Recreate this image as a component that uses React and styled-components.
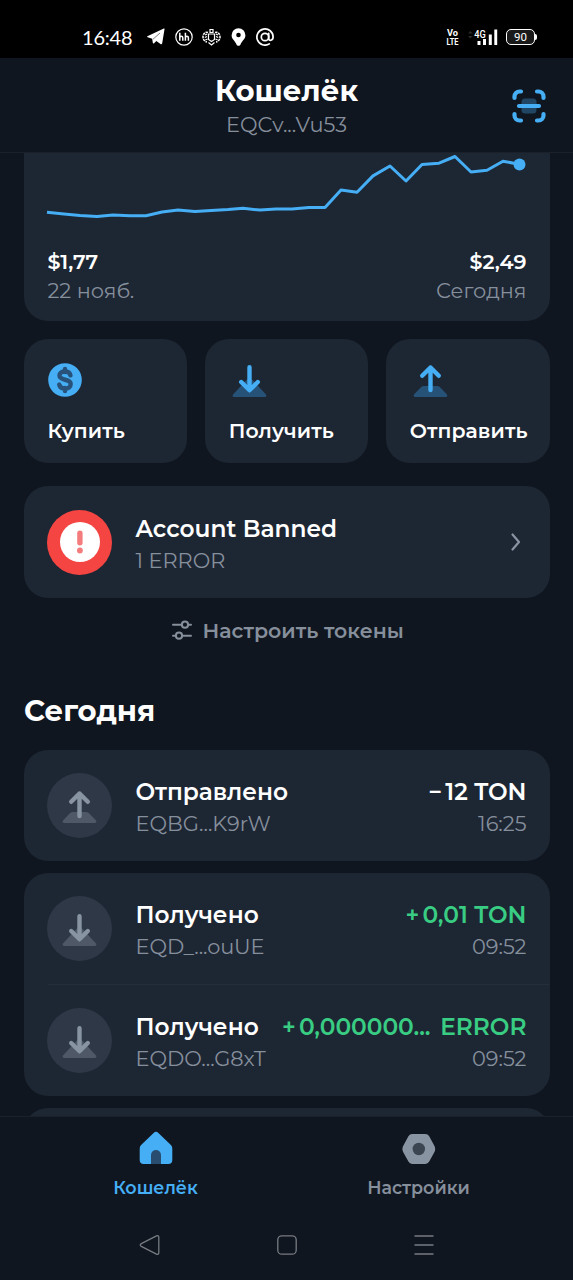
import React from 'react';
import styled, { createGlobalStyle } from 'styled-components';

const accent = '#45aef5'
const muted = '#868f9c'
const panel = '#1d2633'
const page = '#10161f'

const GlobalStyle = createGlobalStyle`
  * {
    box-sizing: border-box;
  }

  body {
    margin: 0;
    background: ${page};
    color: white;
    font-family: 'Montserrat', 'Inter', 'Noto Sans', sans-serif;
  }

  svg {
    display: block;
    flex: none;
  }
`

const Screen = styled.div`
  display: flex;
  flex-direction: column;
  width: 573px;
  height: 1280px;
  overflow: hidden;
  background: ${page};
`

const Text = styled.div`
  color: ${props => props.$color || 'white'};
  font-size: ${props => props.$size || 20.4}px;
  font-weight: 600;
  line-height: ${props => props.$line || 30}px;
  white-space: pre;
`

const Title = styled(Text)`
  font-size: 23.3px;
  line-height: 34px;
`

const Heading = styled(Text)`
  font-size: 29.1px;
  font-weight: 700;
  line-height: 38px;
`

const Caption = styled(Text)`
  color: ${muted};
  font-size: 20.9px;
  font-weight: 400;
`

/* status bar */

const StatusBar = styled.div`
  display: flex;
  align-items: center;
  justify-content: space-between;
  height: 58px;
  padding: 15px 36px 0 82px;
  background: black;
`

const StatusGroup = styled.div`
  display: flex;
  align-items: center;
  gap: ${props => props.$gap}px;
`

const Clock = styled.div`
  font-family: 'Lato', sans-serif;
  font-size: 20px;
  letter-spacing: -0.2px;
  line-height: 24px;
  margin-right: 5px;
  width: 50px;
`

const Battery = styled.div`
  display: flex;
  align-items: center;

  &::after {
    content: '';
    width: 2px;
    height: 6px;
    border-radius: 0 2px 2px 0;
    background: white;
  }
`

const BatteryBody = styled.div`
  width: 29px;
  height: 16px;
  border: 1.5px solid white;
  border-radius: 5px;
  background: #1a1a1a;
  font-family: 'Roboto', sans-serif;
  font-size: 11.5px;
  line-height: 14px;
  text-align: center;
`

/* header */

const Header = styled.header`
  display: grid;
  grid-template-columns: 1fr auto 1fr;
  align-items: center;
  height: 95px;
  padding: 2px 26px 0;
  border-bottom: 1px solid #1a212b;
`

const HeaderTitle = styled.div`
  grid-column: 2;
  display: flex;
  flex-direction: column;
  align-items: center;
`

const ScanButton = styled.div`
  justify-self: end;
  margin-top: -1px;
`

/* content */

const Content = styled.main`
  flex: 1;
  min-height: 0;
  overflow: hidden;
  padding: 0 23.5px 0 24px;
`

const ChartCard = styled.section`
  height: 168px;
  background: ${panel};
  border-radius: 0 0 24px 24px;
`

const ChartLabels = styled.div`
  display: flex;
  justify-content: space-between;
  padding: 8px 23px 0 23.5px;
`

const Column = styled.div`
  display: flex;
  flex-direction: column;
  align-items: ${props => props.$end ? 'flex-end' : 'flex-start'};
`

const Actions = styled.div`
  display: grid;
  grid-template-columns: repeat(3, 1fr);
  gap: 18px;
  margin-top: 18px;
`

const Action = styled.div`
  height: 124px;
  padding: 20px 0 0 23.5px;
  border-radius: 24px;
  background: ${panel};
`

const ActionLabel = styled(Text)`
  letter-spacing: 0.1px;
  margin-top: 15px;
`

const Card = styled.section`
  margin-top: ${props => props.$top}px;
  border-radius: 24px;
  background: ${panel};
`

const Row = styled.div`
  display: flex;
  align-items: center;
  height: ${props => props.$height || 111}px;
  padding: 0 23px;
`

const RowText = styled(Column)`
  margin-left: 23.5px;
  padding-top: 3px;
`

const RowValue = styled(Column)`
  margin-left: auto;
  padding-top: 3px;
`

const Divider = styled.div`
  height: 1px;
  margin-left: 24px;
  background: #242d3a;
`

const Badge = styled.div`
  display: flex;
  align-items: center;
  justify-content: center;
  width: 65px;
  height: 65px;
  border-radius: 50%;
  background: ${props => props.$error ? '#f54542' : '#2e3847'};
`

const ChevronBox = styled.div`
  margin-left: auto;
`

const Configure = styled.div`
  display: flex;
  align-items: center;
  justify-content: center;
  gap: 11px;
  height: 66px;
  padding-left: 2px;
`

const DayTitle = styled(Heading)`
  margin-top: 28px;
`

/* bottom */

const TabBar = styled.nav`
  display: grid;
  grid-template-columns: 1fr 1fr;
  height: 94px;
  padding: 11px 23px 0 24px;
  border-top: 1px solid #1a212b;
`

const Tab = styled.div`
  display: flex;
  flex-direction: column;
  align-items: center;
  gap: 8px;
`

const TabLabel = styled(Text)`
  font-size: 17.5px;
  line-height: 20px;
`

const SystemKeys = styled.div`
  display: flex;
  justify-content: center;
  align-items: center;
  gap: 115px;
  height: 70px;
`

const ArrowIcon = ({ up, color, base, baseOpacity }) => (
  <svg width="42" height="42" viewBox="0 0 42 42" fill="none">
    <path
      d={ up
        ? 'M14 27h13a4 4 0 0 1 2.800 1.100l7 7.200c1.100 1.300.6 2.700-1.100 2.700H5.300c-1.700 0-2.200-1.400-1.100-2.700l7-7.200A4 4 0 0 1 14 27z'
        : 'M17.500 21a4.300 4.300 0 0 1 6 0l13.300 14.300c1.100 1.300.6 2.700-1.100 2.700H5.300c-1.700 0-2.200-1.400-1.100-2.700z' }
      fill={ base } opacity={ baseOpacity } />
    <path
      d={ up ? 'M20.500 31V8.500M12.200 16.800l8.300-8.300 8.300 8.300' : 'M20.500 8.300V31M12.200 23l8.300 8.300 8.300-8.300' }
      stroke={ color } strokeWidth="4.400" strokeLinecap="round" strokeLinejoin="round" />
  </svg>
)

const BuyIcon = () => (
  <svg width="42" height="42" viewBox="0 0 42 42" fill="none">
    <circle cx="17" cy="21" r="16.800" fill={ accent } />
    <path d="M22.500 16.300c-.7-2.500-2.700-3.800-5.500-3.800-3.200 0-5.500 1.500-5.500 4.100 0 5.600 11.200 2.700 11.200 8.500 0 2.800-2.400 4.500-5.700 4.500-2.900 0-5.100-1.400-5.800-4M17 10v3M17 29v3" stroke="#28527a" strokeWidth="4.400" strokeLinecap="round" />
  </svg>
)

const ScanIcon = () => (
  <svg width="36" height="36" viewBox="0 0 36 36" fill="none">
    <rect x="10.500" y="10.500" width="15" height="15" rx="3.500" fill={ accent } opacity=".32" />
    <path d="M3.500 10V8.500a5 5 0 0 1 5-5H10M26 3.500h1.500a5 5 0 0 1 5 5V10M32.500 26v1.500a5 5 0 0 1-5 5H26M10 32.500H8.500a5 5 0 0 1-5-5V26M8 18h20" stroke={ accent } strokeWidth="4.200" strokeLinecap="round" />
  </svg>
)

const PriceChart = () => (
  <svg width="525" height="86" viewBox="24 153 525 86" fill="none">
    <path
      d="M47 212.300L64 214l16 1.500 17 .9 16-1.500 17 .8h16l16-3.700 16-2 17 1.400 16-1 17-.8 15-1.400 17 1.900 16-1.200h16l17-1.300h16l16-17.600 16 2.200 16-16.300 17-9.900 16 15 16-16.500 17-1.300 16-6.700 16 15.500 16-1.800 16-9 16 3"
      stroke={ accent } strokeWidth="3" strokeLinejoin="round" />
    <circle cx="519.500" cy="164.500" r="6" fill={ accent } />
  </svg>
)

const AlertIcon = () => (
  <svg width="40" height="40" viewBox="0 0 40 40">
    <circle cx="20" cy="20" r="20" fill="white" />
    <rect x="17.200" y="8.600" width="5.400" height="14.800" rx="2.700" fill="#f57c7c" />
    <circle cx="19.900" cy="28.500" r="2.900" fill="#f57c7c" />
  </svg>
)

const SlidersIcon = () => (
  <svg width="20" height="22" viewBox="0 0 20 22" fill="none" stroke={ muted } strokeWidth="2" strokeLinecap="round">
    <path d="M1 4.700h8.500M16.500 4.700H19M1 15.700h2.500M10.500 15.700H19" />
    <circle cx="13" cy="4.700" r="3.100" />
    <circle cx="7" cy="15.700" r="3.100" />
  </svg>
)

const HomeIcon = () => (
  <svg width="42" height="42" viewBox="0 0 42 42">
    <path d="M18.600 5a3.400 3.400 0 0 1 4.800 0l12.500 12a5 5 0 0 1 1.400 3.500V32a4 4 0 0 1-4 4h-24.600a4 4 0 0 1-4-4V20.500a5 5 0 0 1 1.400-3.500z" fill={ accent } />
    <path d="M16 36V27a5 5 0 0 1 10 0v9z" fill="#284d6e" />
  </svg>
)

const SettingsIcon = () => (
  <svg width="42" height="42" viewBox="0 0 42 42">
    <path d="M14.300 6h13a4.500 4.500 0 0 1 3.900 2.200l5 9.300a7 7 0 0 1 0 7l-5 9a4.500 4.500 0 0 1-3.900 2.500h-13a4.500 4.500 0 0 1-3.900-2.500l-5-9a7 7 0 0 1 0-7l5-9.300A4.500 4.500 0 0 1 14.300 6z" fill="#8994a3" />
    <circle cx="20.800" cy="21" r="6.200" fill="#3b4451" />
  </svg>
)

const TelegramIcon = () => (
  <svg width="18" height="17" viewBox="0 0 18 17" fill="white">
    <path d="M17.500 1.200L15.200 15.300c-.2 1-.9 1.200-1.700.7L9.300 13l-2.200 2.300c-.6.6-1.200.3-1.300-.5L5.200 10.800.7 9.200c-.8-.3-.8-.9.200-1.300L16.300.8c.8-.3 1.300-.3 1.200.4z" />
    <path d="M6 11.200l7-6.200" stroke="black" strokeWidth=".5" />
  </svg>
)

const JobsIcon = () => (
  <svg width="18" height="18" viewBox="0 0 18 18" fill="none" stroke="white">
    <circle cx="9" cy="9" r="8.200" strokeWidth="1.200" />
    <path d="M4.800 4.800v8M4.800 10c0-2.300 3-2.300 3 0v2.800M10.400 4.800v8M10.400 10c0-2.300 3-2.300 3 0v2.800" strokeWidth="1.500" />
  </svg>
)

const EmblemIcon = () => (
  <svg width="19" height="18" viewBox="0 0 19 18" fill="none" stroke="white" strokeWidth="1.200">
    <path d="M8 1.500h3v3H8zM6.500 6h6v5.500l-3 2-3-2zM6.500 14.500l3 2.500 3-2.500" />
    <path d="M6 4.500C3 3.500 1 6 1 9c0 2.500 1.500 4.500 4 5M13 4.500c3-1 5 1.500 5 4.500 0 2.500-1.500 4.500-4 5" strokeDasharray="2.500 .8" strokeWidth="1.500" />
    <path d="M5.200 6L3 7M5 8.500l-2.200 1M5.500 11l-2.200 1M13.800 6L16 7M14 8.500l2.200 1M13.500 11l2.200 1" />
  </svg>
)

const PinIcon = () => (
  <svg width="15" height="18" viewBox="0 0 15 18">
    <path d="M7.500.3a6.900 6.900 0 0 1 6.900 6.900c0 4-3.700 5.800-4.900 9.200-.5 1.800-3.500 1.800-4 0C4.300 13 .6 11.200.6 7.200A6.900 6.900 0 0 1 7.500.3z" fill="white" />
    <circle cx="7.500" cy="7" r="2.300" fill="black" />
  </svg>
)

const MailIcon = () => (
  <svg width="18" height="18" viewBox="0 0 18 18" fill="none" stroke="white" strokeWidth="1.700" strokeLinecap="round">
    <circle cx="9" cy="9" r="3.700" />
    <path d="M12.700 5.300v5.200c0 2.900 4.400 2.200 4.400-1.500A8.100 8.100 0 1 0 13.300 15.900" />
  </svg>
)

const VolteIcon = () => (
  <svg width="14" height="26" viewBox="0 0 14 26" fill="white" fontFamily="Roboto, sans-serif" fontSize="9.500" fontWeight="700">
    <text x="1" y="11.800" textLength="11" lengthAdjust="spacingAndGlyphs">Vo</text>
    <text x=".5" y="20.800" textLength="12" lengthAdjust="spacingAndGlyphs">LTE</text>
  </svg>
)

const SignalIcon = () => (
  <svg width="30" height="18" viewBox="0 0 30 18" fill="white">
    <path d="M0 5.500l2.300-2.500 2.300 2.500zM0 8l2.300 2.500L4.600 8z" fill="#2b2b2b" />
    <text x="6.300" y="9.500" fontFamily="Roboto, sans-serif" fontSize="11.500" fontWeight="500" textLength="11.500" lengthAdjust="spacingAndGlyphs">4G</text>
    <path d="M9.500 13h3v4h-3zM15 11h3v6h-3zM20.800 6.500h3V17h-3zM26.300 1.500h2.900V17h-2.900z" />
  </svg>
)

const SystemBar = () => (
  <StatusBar>
    <StatusGroup $gap={ 9.8 }>
      <Clock>16:48</Clock>
      <TelegramIcon />
      <JobsIcon />
      <EmblemIcon />
      <PinIcon />
      <MailIcon />
    </StatusGroup>
    <StatusGroup $gap={ 8 }>
      <VolteIcon />
      <SignalIcon />
      <Battery><BatteryBody>90</BatteryBody></Battery>
    </StatusGroup>
  </StatusBar>
)

const Transaction = ({ up, title, address, amount, income, time }) => (
  <Row>
    <Badge>
      <ArrowIcon up={ up } color="#8994a3" base="#8994a3" baseOpacity=".35" />
    </Badge>
    <RowText>
      <Title>{ title }</Title>
      <Caption>{ address }</Caption>
    </RowText>
    <RowValue $end>
      <Title $color={ income ? '#39cc83' : 'white' }>{ amount }</Title>
      <Caption>{ time }</Caption>
    </RowValue>
  </Row>
)

const App = () => {
  return(
    <React.Fragment>
      <GlobalStyle />
      <Screen>
        <SystemBar />
        <Header>
          <HeaderTitle>
            <Heading>Кошелёк</Heading>
            <Caption>EQCv...Vu53</Caption>
          </HeaderTitle>
          <ScanButton><ScanIcon /></ScanButton>
        </Header>

        <Content>
          <ChartCard>
            <PriceChart />
            <ChartLabels>
              <Column>
                <Text $size={ 20.7 } $line={ 29 }>$1,77</Text>
                <Caption>22 нояб.</Caption>
              </Column>
              <Column $end>
                <Text $size={ 20.7 } $line={ 29 }>$2,49</Text>
                <Caption>Сегодня</Caption>
              </Column>
            </ChartLabels>
          </ChartCard>

          <Actions>
            <Action>
              <BuyIcon />
              <ActionLabel>Купить</ActionLabel>
            </Action>
            <Action>
              <ArrowIcon color={ accent } base="#275277" />
              <ActionLabel>Получить</ActionLabel>
            </Action>
            <Action>
              <ArrowIcon up color={ accent } base="#275277" />
              <ActionLabel>Отправить</ActionLabel>
            </Action>
          </Actions>

          <Card $top={ 23 }>
            <Row $height={ 112 }>
              <Badge $error><AlertIcon /></Badge>
              <RowText>
                <Title>Account Banned</Title>
                <Caption>1 ERROR</Caption>
              </RowText>
              <ChevronBox>
                <svg width="22" height="20" viewBox="0 0 22 20" fill="none">
                  <path d="M7.500 2.500l6.500 7.500-6.500 7.500" stroke="#8994a3" strokeWidth="2.200" strokeLinecap="round" strokeLinejoin="round" />
                </svg>
              </ChevronBox>
            </Row>
          </Card>

          <Configure>
            <SlidersIcon />
            <Text $color={ muted } $size={ 20.5 }>Настроить токены</Text>
          </Configure>

          <DayTitle>Сегодня</DayTitle>

          <Card $top={ 20 }>
            <Transaction up title="Отправлено" address="EQBG...K9rW" amount={ '−\u200912 TON' } time="16:25" />
          </Card>

          <Card $top={ 12 }>
            <Transaction title="Получено" address="EQD_...ouUE" amount={ '+\u20090,01 TON' } income time="09:52" />
            <Divider />
            <Transaction title="Получено" address="EQDO...G8xT" amount={ '+\u20090,000000...\u2009 ERROR' } income time="09:52" />
          </Card>

          <Card $top={ 12 }>
            <Row />
          </Card>
        </Content>

        <TabBar>
          <Tab>
            <HomeIcon />
            <TabLabel $color={ accent }>Кошелёк</TabLabel>
          </Tab>
          <Tab>
            <SettingsIcon />
            <TabLabel $color={ muted }>Настройки</TabLabel>
          </Tab>
        </TabBar>
        <SystemKeys>
          <svg width="22" height="22" viewBox="0 0 22 22" fill="none" stroke="#777b82" strokeWidth="1.300">
            <path d="M2.300 9.600L17.500 1.900c1.300-.6 2.300 0 2.300 1.300v15.600c0 1.300-1 1.900-2.300 1.300L2.300 12.400c-1.400-.8-1.400-2 0-2.800z" />
          </svg>
          <svg width="22" height="22" viewBox="0 0 22 22" fill="none" stroke="#777b82" strokeWidth="1.300">
            <rect x="1.800" y="1.800" width="18.400" height="18.400" rx="4" />
          </svg>
          <svg width="22" height="22" viewBox="0 0 22 22" fill="none" stroke="#777b82" strokeWidth="1.500">
            <path d="M1.500 2h19M1.500 11h19M1.500 20h19" />
          </svg>
        </SystemKeys>
      </Screen>
    </React.Fragment>
  )
}

export default App
